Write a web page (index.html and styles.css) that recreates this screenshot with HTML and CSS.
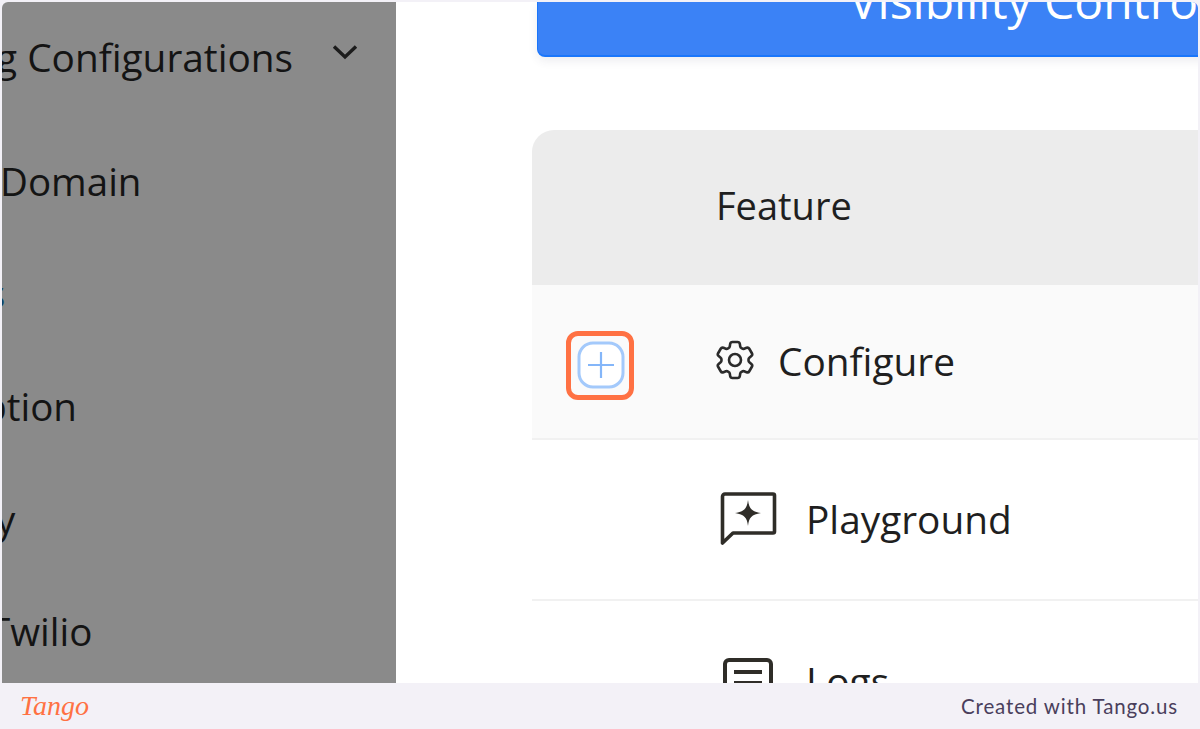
FILE: index.html
```html
<!DOCTYPE html>
<html lang="en">
<head>
<meta charset="utf-8">
<title>Feature visibility</title>
<link rel="stylesheet" href="styles.css">
</head>
<body>
<div class="frame">
  <div class="view">
    <aside class="sidebar">
      <div class="nav-item nav-first"><span class="frag-config">g Configurations</span>
        <svg class="chevron" viewBox="0 0 26 16" width="26" height="16"><path d="M2 2.5 L13 13 L24 2.5" fill="none" stroke="#1c1c1c" stroke-width="3.4"/></svg>
      </div>
      <div class="nav-item"><span class="frag-domain">Domain</span></div>
      <div class="nav-item nav-active"><span class="frag-s">s</span></div>
      <div class="nav-item"><span class="frag-option">option</span></div>
      <div class="nav-item"><span class="frag-y">y</span></div>
      <div class="nav-item"><span class="frag-twilio">Twilio</span></div>
    </aside>
    <main class="content">
      <div class="banner"><span class="banner-title">Visibility Control</span></div>
      <div class="table">
        <div class="thead"><span class="th">Feature</span></div>
        <div class="row row-hover">
          <div class="toggle-cell">
            <div class="highlight">
              <svg class="plus" viewBox="0 0 48 48" width="48" height="48"><rect x="2" y="2" width="44" height="44" rx="14" fill="#fff" stroke="#a3c9fb" stroke-width="3"/><path d="M24 11V37M11 24H37" stroke="#84b6f9" stroke-width="2.2" fill="none"/></svg>
            </div>
          </div>
          <svg class="ic-gear" viewBox="0 0 24 24" width="48" height="48" fill="none" stroke="#2b2b2b" stroke-width="1.3" stroke-linejoin="round"><path d="M9.594 3.94c.09-.542.56-.94 1.11-.94h2.593c.55 0 1.02.398 1.11.94l.213 1.281c.063.374.313.686.645.87.074.04.147.083.22.127.325.196.72.257 1.075.124l1.217-.456a1.125 1.125 0 0 1 1.37.49l1.296 2.247a1.125 1.125 0 0 1-.26 1.431l-1.003.827c-.293.241-.438.613-.43.992a7.723 7.723 0 0 1 0 .255c-.008.378.137.75.43.991l1.004.827c.424.35.534.955.26 1.43l-1.298 2.247a1.125 1.125 0 0 1-1.369.491l-1.217-.456c-.355-.133-.75-.072-1.076.124a6.47 6.47 0 0 1-.22.128c-.331.183-.581.495-.644.869l-.213 1.281c-.09.543-.56.94-1.11.94h-2.594c-.55 0-1.019-.398-1.11-.94l-.213-1.281c-.062-.374-.312-.686-.644-.87a6.52 6.52 0 0 1-.22-.127c-.325-.196-.72-.257-1.076-.124l-1.217.456a1.125 1.125 0 0 1-1.369-.49l-1.297-2.247a1.125 1.125 0 0 1 .26-1.431l1.004-.827c.292-.24.437-.613.43-.991a6.932 6.932 0 0 1 0-.255c.007-.38-.138-.751-.43-.992l-1.004-.827a1.125 1.125 0 0 1-.26-1.43l1.297-2.247a1.125 1.125 0 0 1 1.37-.491l1.216.456c.356.133.751.072 1.076-.124.072-.044.146-.086.22-.128.332-.183.582-.495.644-.869l.214-1.28Z"/><path d="M15 12a3 3 0 1 1-6 0 3 3 0 0 1 6 0Z"/></svg>
          <span class="label">Configure</span>
        </div>
        <div class="row row-play">
          <svg class="ic-chat" viewBox="0 0 60 60" width="60" height="60"><path d="M6 4H54a1.500 1.500 0 0 1 1.500 1.500V41.500a1.500 1.500 0 0 1-1.500 1.500H14L3.500 53V6.500a2.500 2.500 0 0 1 2.500-2.500z" fill="none" stroke="#2f2d28" stroke-width="3.6" stroke-linejoin="round"/><path d="M29 10c1 8.500 3.500 11.500 13 13c-9.500 1.500-12 4.500-13 13c-1-8.500-3.500-11.500-13-13c9.500-1.500 12-4.500 13-13z" fill="#2f2d28"/></svg>
          <span class="label">Playground</span>
        </div>
        <div class="row row-logs">
          <svg class="ic-logs" viewBox="0 0 52 52" width="52" height="52" fill="none" stroke="#2f2d28" stroke-width="4"><rect x="3" y="3" width="46" height="46" rx="4"/><path d="M12 15H40M12 26H40M12 37H30"/></svg>
          <span class="label">Logs</span>
        </div>
      </div>
    </main>
  </div>
  <footer class="footer">
    <span class="logo">Tango</span>
    <span class="credit">Created with Tango.us</span>
  </footer>
</div>
</body>
</html>
```
FILE: styles.css
```css
* { box-sizing: border-box; }
html, body { margin: 0; height: 100%; }
body {
  background: #f3f1f7;
  font-family: "Open Sans", "Noto Sans", sans-serif;
  overflow: hidden;
}
.frame {
  width: 1200px;
  height: 729px;
  display: flex;
  flex-direction: column;
  padding-top: 2px;
}
.view {
  flex: 1;
  min-height: 0;
  display: flex;
  margin: 0 2px;
  overflow: hidden;
  border-radius: 6px 6px 0 0;
  background: #fff;
}
.sidebar {
  width: 394px;
  flex: none;
  background: #8a8a8a;
  color: #141414;
  font-size: 38.5px;
  overflow: hidden;
}
.nav-item {
  height: 112.6px;
  display: flex;
  align-items: center;
  white-space: nowrap;
  position: relative;
}
.nav-first { margin-bottom: 10px; }
.nav-active { color: #0b3f66; }
.chevron { position: absolute; left: 330px; top: 42px; }
.frag-config { margin: -2px 0 0 -6px; font-size: 38.8px; }
.frag-domain { margin-left: -2px; }
.frag-s { margin-left: -15px; }
.frag-option { margin-left: -42px; }
.frag-y { margin-left: -6px; }
.frag-twilio { margin-left: -13px; }

.content {
  flex: 1;
  min-width: 0;
  overflow: hidden;
}
.banner {
  height: 55px;
  margin-left: 141px;
  margin-right: -10px;
  background: #3b82f6;
  border-bottom: 2px solid #1a76fb;
  border-left: 1px solid #1a76fb;
  border-radius: 0 0 0 8px;
  box-shadow: 0 4px 10px rgba(60, 50, 90, .09);
  color: #fff;
  font-size: 48px;
  line-height: 1;
  white-space: nowrap;
  overflow: hidden;
}
.banner-title { display: block; margin: -25px 0 0 311px; }
.table {
  margin: 73px 0 0 136px;
  border-radius: 22px 0 0 0;
  overflow: hidden;
  color: #1f1f1f;
}
.thead {
  height: 155px;
  background: #ececec;
  display: flex;
  align-items: center;
  padding: 0 0 6px 184px;
}
.th { font-size: 38px; }
.row {
  display: flex;
  align-items: center;
  border-bottom: 2px solid #f1f1f1;
}
.label { font-size: 38.8px; margin-top: -2px; }
.row-hover { height: 155px; background: #fafafa; padding-left: 34px; }
.row-play { height: 161px; padding-left: 187px; }
.row-logs { height: 120px; padding-left: 190px; border: 0; align-items: flex-start; padding-top: 56px; }
.toggle-cell { width: 145px; flex: none; }
.highlight {
  width: 68px;
  height: 69px;
  margin-top: 7px;
  padding-left: 2px;
  border: 5px solid #ff7143;
  border-radius: 12px;
  display: flex;
  align-items: center;
  justify-content: center;
  background: #fafafa;
}
.ic-gear { margin: -3px 19px 0 0; flex: none; }
.ic-chat { margin-right: 27px; flex: none; }
.ic-logs { margin-right: 32px; flex: none; }
.footer {
  height: 46px;
  flex: none;
  display: flex;
  align-items: center;
  justify-content: space-between;
  padding: 0 22px 0 20px;
}
.logo {
  font-family: "Liberation Serif", serif;
  font-style: italic;
  font-size: 28px;
  color: #ff7143;
  line-height: 1;
}
.credit {
  font-family: Lato, sans-serif;
  font-size: 20.5px;
  color: #4a3f5c;
  letter-spacing: .85px;
}
```
